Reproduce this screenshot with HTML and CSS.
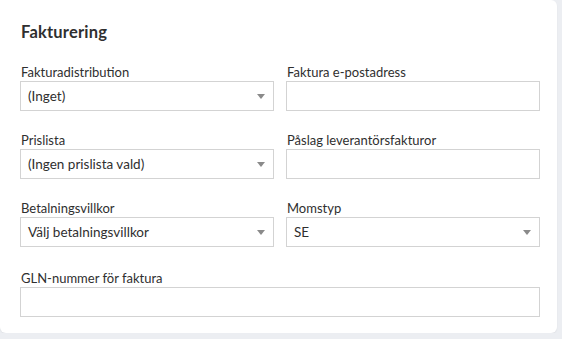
FILE: index.html
```html
<!DOCTYPE html>
<html lang="sv">
<head>
    <meta charset="UTF-8">
    <title>Fakturering</title>
    <link rel="stylesheet" href="styles.css">
</head>
<body>
<div class="card">
    <h2 class="title">Fakturering</h2>
    <div class="form">
        <div class="field">
            <label>Fakturadistribution</label>
            <div class="select">(Inget)<span class="arrow"></span></div>
        </div>
        <div class="field">
            <label>Faktura e-postadress</label>
            <div class="input"></div>
        </div>
        <div class="field">
            <label>Prislista</label>
            <div class="select">(Ingen prislista vald)<span class="arrow"></span></div>
        </div>
        <div class="field">
            <label>Påslag leverantörsfakturor</label>
            <div class="input"></div>
        </div>
        <div class="field">
            <label>Betalningsvillkor</label>
            <div class="select">Välj betalningsvillkor<span class="arrow"></span></div>
        </div>
        <div class="field">
            <label>Momstyp</label>
            <div class="select">SE<span class="arrow"></span></div>
        </div>
        <div class="field wide">
            <label>GLN-nummer för faktura</label>
            <div class="input"></div>
        </div>
    </div>
</div>
</body>
</html>
```

FILE: styles.css
```css
* {
    margin: 0;
    padding: 0;
    box-sizing: border-box;
}

body {
    background-color: #eceef2;
    font-family: Lato, "Noto Sans", sans-serif;
    color: #2f2f2f;
}

.card { /* white panel */
    width: 557px;
    height: 333px;
    background-color: #fff;
    border-radius: 0 6px 6px 6px;
    box-shadow: 0 1px 2px rgba(0, 0, 0, 0.06);
    padding: 22px 17px 16px 20px;
}

.title {
    font-size: 16.5px;
    font-weight: 700;
    line-height: 20px;
    letter-spacing: 0.2px;
    padding-left: 1px;
    margin-bottom: 22px;
}

.form {
    display: grid;
    grid-template-columns: 1fr 1fr;
    column-gap: 12px;
    row-gap: 21px;
}

.field.wide {
    grid-column: 1 / 3;
    margin-top: 2px;
}

.field label {
    display: block;
    font-size: 13px;
    line-height: 16px;
    padding-left: 1px;
    margin-bottom: 1px;
}

.select, .input {
    height: 30px;
    border: 1px solid #d3d3d3;
    font-size: 13.5px;
    line-height: 28px;
    padding-left: 7px;
    position: relative;
}

.arrow { /* dropdown triangle */
    position: absolute;
    right: 8px;
    top: 12px;
    width: 0;
    height: 0;
    border-left: 4px solid transparent;
    border-right: 4px solid transparent;
    border-top: 5px solid #8a8a8a;
}
```
